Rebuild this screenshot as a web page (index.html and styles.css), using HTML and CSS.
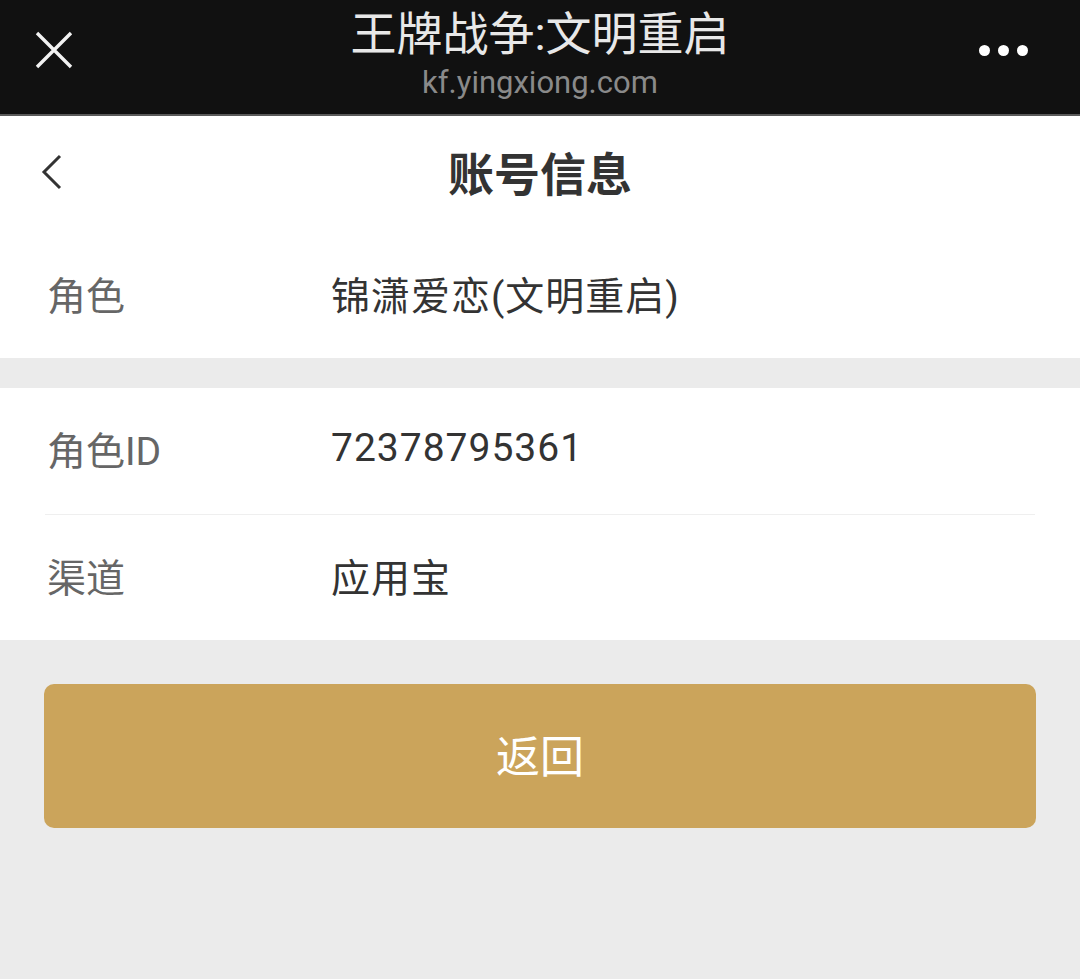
FILE: index.html
```html
<!DOCTYPE html>
<html>
	<head>
		<title>账号信息</title>
		<meta charset="utf-8"/>
		<link rel="stylesheet" href="styles.css">
	</head>
	<body>
		<div id="topBar">
			<svg class="closeIcon" width="38" height="38" viewBox="0 0 38 38">
				<path d="M2 2 L36 36 M36 2 L2 36" stroke="#f2f2f2" stroke-width="3.4" fill="none"/>
			</svg>
			<div class="titles">
				<div class="pageTitle">王牌战争:文明重启</div>
				<div class="pageUrl">kf.yingxiong.com</div>
			</div>
			<div class="moreIcon"><span></span><span></span><span></span></div>
		</div>
		<div id="header">
			<svg class="backIcon" width="24" height="36" viewBox="0 0 24 36">
				<path d="M20 2 L4 18 L20 34" stroke="#333" stroke-width="3" fill="none"/>
			</svg>
			<div class="headerTitle">账号信息</div>
		</div>
		<div class="group">
			<div class="row">
				<div class="label">角色</div>
				<div class="value">锦潇爱恋(文明重启)</div>
			</div>
		</div>
		<div class="group second">
			<div class="row">
				<div class="label">角色ID</div>
				<div class="value">72378795361</div>
			</div>
			<div class="row">
				<div class="label">渠道</div>
				<div class="value">应用宝</div>
			</div>
		</div>
		<div class="actions">
			<div class="backButton">返回</div>
		</div>
	</body>
</html>
```

FILE: styles.css
```css
html { width:100%; height:100%; }
body {
	margin:0px;
	background:#ebebeb;
	font-family:Roboto, "Noto Sans CJK SC", sans-serif;
	color:#333;
	min-height:100%;
}

#topBar {
	height:116px;
	background:#111111;
	border-bottom:2px solid #5a5a5a;
	display:grid;
	grid-template-columns:1fr auto 1fr;
	align-items:center;
	padding:0 52px 0 35px;
	box-sizing:border-box;
}
.closeIcon { margin-top:-14px; }
.titles {
	display:flex;
	flex-direction:column;
	align-items:center;
	margin-top:-4px;
	margin-right:-17px;
}
.pageTitle {
	color:#e8e8e8;
	font-size:46px;
	line-height:50px;
}
.pageUrl {
	color:#8a8a8a;
	font-size:31px;
	line-height:36px;
	margin-top:6px;
}
.moreIcon {
	display:flex;
	justify-content:flex-end;
	gap:8px;
	margin-top:-14px;
}
.moreIcon span {
	width:11px;
	height:11px;
	border-radius:50%;
	background:#fff;
}

#header {
	background:#fff;
	height:118px;
	display:flex;
	align-items:center;
	justify-content:center;
	position:relative;
}
.backIcon {
	position:absolute;
	left:40px;
	top:38px;
}
.headerTitle {
	font-size:46px;
	font-weight:bold;
	color:#333;
	margin-top:-8px;
}

.group {
	background:#fff;
	padding:0 45px;
}
.group.second {
	margin-top:30px;
}
.row {
	display:flex;
	align-items:center;
	height:124px;
	font-size:39px;
	padding-bottom:6px;
	box-sizing:border-box;
}
.second .row { height:126px; }
.row + .row {
	border-top:1px solid #efefef;
}
.label {
	width:284px;
	color:#666;
	padding-left:2px;
}
.value {
	color:#333;
	letter-spacing:1px;
}

.actions {
	padding:44px 44px;
}
.backButton {
	background:#cba45b;
	border-radius:10px;
	height:144px;
	display:flex;
	align-items:center;
	justify-content:center;
	color:#fff;
	font-size:44px;
	padding-bottom:4px;
	box-sizing:border-box;
}
```
